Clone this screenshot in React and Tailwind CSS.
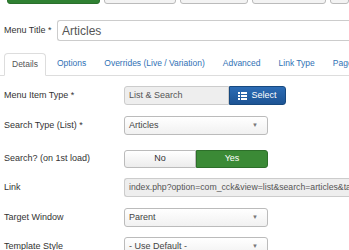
export default function App() {
  const font = { fontFamily: '"Liberation Sans", Arial, sans-serif' };
  return (
    <div className="w-[349px] h-[250px] overflow-hidden bg-white text-[#333]" style={font}>
      {/* toolbar */}
      <div className="h-[12px] border-b border-[#e5e5e5] flex items-start gap-[4px] pl-[7px] -mt-[14px]">
        <div className="w-[96px] h-[18px] rounded-[3px] bg-[#2f8132] border border-[#2a702c]" />
        <div className="w-[74px] h-[18px] rounded-[3px] bg-[#f3f3f3] border border-[#bbb]" />
        <div className="w-[70px] h-[18px] rounded-[3px] bg-[#f3f3f3] border border-[#bbb]" />
        <div className="w-[76px] h-[18px] rounded-[3px] bg-[#f3f3f3] border border-[#bbb]" />
        <div className="w-[20px] h-[18px] rounded-[3px] bg-[#f3f3f3] border border-[#bbb]" />
      </div>

      {/* title */}
      <div className="flex items-center mt-[22px] pl-[4px]">
        <label className="text-[9px] w-[53px]">Menu Title *</label>
        <div className="flex-1 h-[21px] border border-[#ccc] rounded-l-[3px] border-r-0 flex items-center pl-[4px] text-[12px] text-[#555]">
          Articles
        </div>
      </div>

      {/* tabs */}
      <div className="flex items-end mt-[12px] pl-[4px] border-b border-[#ddd] h-[23px] text-[8.5px] whitespace-nowrap">
        <div className="h-[23px] -mb-px px-[7px] border border-[#ddd] border-b-white bg-white rounded-t-[4px] flex items-center text-[#555]">Details</div>
        <div className="flex items-center h-[23px] text-[#3071b5] gap-[18px] pl-[11px]">
          <span>Options</span>
          <span>Overrides (Live / Variation)</span>
          <span>Advanced</span>
          <span>Link Type</span>
          <span>Page Display</span>
        </div>
      </div>

      {/* rows */}
      <div className="pl-[4px] mt-[10px] flex flex-col gap-[11px] text-[9px]">
        <div className="flex items-center h-[19px]">
          <label className="w-[120px]">Menu Item Type *</label>
          <div className="w-[105px] h-[19px] bg-[#eee] border border-[#ccc] rounded-l-[3px] flex items-center pl-[4px] text-[#555]">List &amp; Search</div>
          <div className="w-[57px] h-[19px] bg-gradient-to-b from-[#2c6cb5] to-[#1d5494] border border-[#17497f] rounded-r-[3px] flex items-center justify-center gap-[4px] text-white">
            <svg width="9" height="8" viewBox="0 0 9 8" fill="white">
              <rect x="0" y="0" width="2" height="2" />
              <rect x="3" y="0" width="6" height="2" />
              <rect x="0" y="3" width="2" height="2" />
              <rect x="3" y="3" width="6" height="2" />
              <rect x="0" y="6" width="2" height="2" />
              <rect x="3" y="6" width="6" height="2" />
            </svg>
            Select
          </div>
        </div>

        <div className="flex items-center h-[19px]">
          <label className="w-[120px]">Search Type (List) *</label>
          <div className="w-[144px] h-[19px] bg-gradient-to-b from-white to-[#f1f1f1] border border-[#bbb] rounded-[3px] flex items-center justify-between px-[4px] text-[#444]">
            <span>Articles</span>
            <span className="text-[6px] text-[#777] pr-[5px]">▼</span>
          </div>
        </div>

        <div className="flex items-center h-[18px] mt-[4px]">
          <label className="w-[120px]">Search? (on 1st load)</label>
          <div className="flex w-[144px] h-[18px]">
            <div className="w-[72px] bg-gradient-to-b from-white to-[#ececec] border border-[#bbb] rounded-l-[3px] flex items-center justify-center">No</div>
            <div className="w-[72px] bg-[#3b8a36] border border-[#2d6f2a] rounded-r-[3px] flex items-center justify-center text-white">Yes</div>
          </div>
        </div>

        <div className="flex items-center h-[19px] -mt-[1px]">
          <label className="w-[120px]">Link</label>
          <div className="flex-1 h-[19px] bg-[#eee] border border-[#ccc] border-r-0 rounded-l-[3px] flex items-center pl-[4px] text-[8.7px] text-[#555] whitespace-nowrap overflow-hidden">
            index.php?option=com_cck&amp;view=list&amp;search=articles&amp;task=search
          </div>
        </div>

        <div className="flex items-center h-[19px]">
          <label className="w-[120px]">Target Window</label>
          <div className="w-[144px] h-[19px] bg-gradient-to-b from-white to-[#f1f1f1] border border-[#bbb] rounded-[3px] flex items-center justify-between px-[4px] text-[#444]">
            <span>Parent</span>
            <span className="text-[6px] text-[#777] pr-[5px]">▼</span>
          </div>
        </div>

        <div className="flex items-center h-[19px] -mt-[1px]">
          <label className="w-[120px]">Template Style</label>
          <div className="w-[144px] h-[19px] bg-gradient-to-b from-white to-[#f1f1f1] border border-[#bbb] rounded-[3px] flex items-center justify-between px-[4px] text-[#444]">
            <span>- Use Default -</span>
            <span className="text-[6px] text-[#777] pr-[5px]">▼</span>
          </div>
        </div>
      </div>
    </div>
  );
}
